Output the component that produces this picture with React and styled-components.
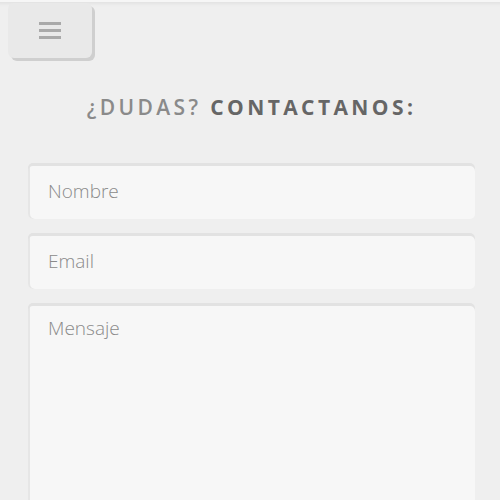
import React from 'react';
import styled, { createGlobalStyle } from 'styled-components';

const GlobalStyle = createGlobalStyle`
  html, body {
    margin: 0;
    padding: 0;
    background: #efefef;
    font-family: 'Open Sans', 'Liberation Sans', sans-serif;
  }
`;

const Page = styled.div`
  min-height: 500px;
  box-sizing: border-box;
  padding: 3px 25px 0 28px;
  border-top: 2px solid #f6f6f6;
  box-shadow: inset 0 5px 3px -3px #e3e3e3;
  overflow: hidden;
`;

const MenuButton = styled.button`
  display: flex;
  flex-direction: column;
  align-items: center;
  justify-content: center;
  gap: 4px;
  width: 84px;
  height: 55px;
  margin: -2px 0 0 -20px;
  border: none;
  border-radius: 6px;
  background: #e9e9e9;
  box-shadow: 3px 3px 0 #cfcfcf;
  padding: 0;
`;

const Bar = styled.span`
  display: block;
  width: 22px;
  height: 3px;
  background: #a9a9a9;
`;

const Heading = styled.h2`
  margin: 35px 0 42px;
  text-align: center;
  font-size: 21px;
  font-weight: 700;
  letter-spacing: 3.4px;
  color: #666;
`;

const Light = styled.span`
  color: #8a8a8a;
  font-weight: 600;
`;

const Form = styled.form`
  display: flex;
  flex-direction: column;
  gap: 14px;
`;

const Field = styled.div`
  height: ${(p) => p.h}px;
  box-sizing: border-box;
  border-radius: 5px;
  background: #f7f7f7;
  box-shadow: inset 0 3px 0 #e2e2e2, inset 2px 0 0 #e6e6e6;
  padding: ${(p) => (p.area ? '12px' : '0')} 20px 0;
  display: flex;
  align-items: ${(p) => (p.area ? 'flex-start' : 'center')};
  font-size: 19px;
  font-weight: 300;
  color: #8a8a8a;
`;

export default function App() {
  return (
    <>
      <GlobalStyle />
      <Page>
        <MenuButton aria-label="menu">
          <Bar />
          <Bar />
          <Bar />
        </MenuButton>
        <Heading>
          <Light>¿DUDAS?</Light> CONTACTANOS:
        </Heading>
        <Form>
          <Field h={56}>Nombre</Field>
          <Field h={56}>Email</Field>
          <Field h={220} area>
            Mensaje
          </Field>
        </Form>
      </Page>
    </>
  );
}
